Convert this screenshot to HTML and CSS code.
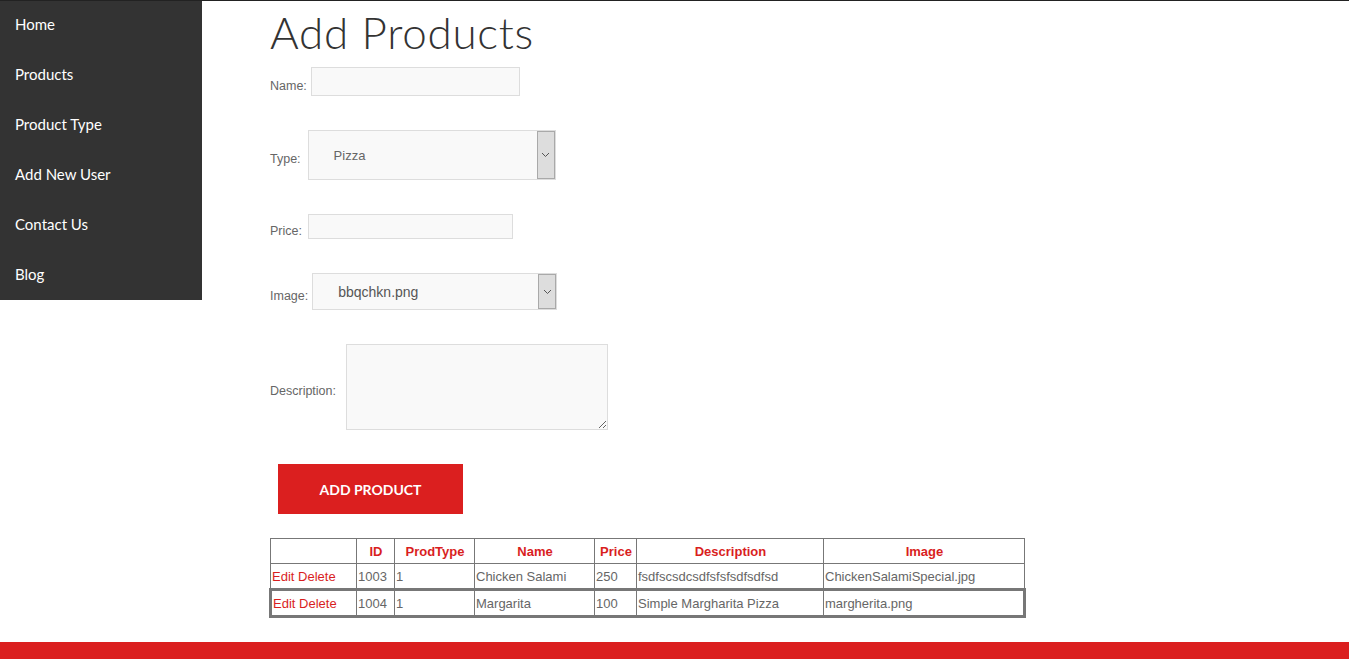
FILE: index.html
```html
<!DOCTYPE html>
<html>
<head>
<meta charset="utf-8">
<title>Add Products</title>
<link rel="stylesheet" href="styles.css">
</head>
<body>
<div class="page">
  <nav class="sidebar">
    <a class="nav-item" href="#">Home</a>
    <a class="nav-item" href="#">Products</a>
    <a class="nav-item" href="#">Product Type</a>
    <a class="nav-item" href="#">Add New User</a>
    <a class="nav-item" href="#">Contact Us</a>
    <a class="nav-item" href="#">Blog</a>
  </nav>
  <main class="main">
    <h1 class="title">Add Products</h1>
    <form class="form">
      <div class="row">
        <label class="label">Name:</label>
        <input class="field field-name" type="text">
      </div>
      <div class="row">
        <label class="label">Type:</label>
        <div class="select select-type">
          <span class="select-value">Pizza</span>
          <span class="select-arrow"><svg width="9" height="6" viewBox="0 0 9 6"><path d="M1 1l3.5 3.5L8 1" fill="none" stroke="#555" stroke-width="1"/></svg></span>
        </div>
      </div>
      <div class="row">
        <label class="label">Price:</label>
        <input class="field field-price" type="text">
      </div>
      <div class="row">
        <label class="label">Image:</label>
        <div class="select select-image">
          <span class="select-value value-image">bbqchkn.png</span>
          <span class="select-arrow"><svg width="9" height="6" viewBox="0 0 9 6"><path d="M1 1l3.5 3.5L8 1" fill="none" stroke="#555" stroke-width="1"/></svg></span>
        </div>
      </div>
      <div class="row">
        <label class="label">Description:</label>
        <textarea class="field field-desc"></textarea>
      </div>
      <div class="row">
        <button class="btn" type="button">ADD PRODUCT</button>
      </div>
    </form>
    <table class="table">
      <colgroup>
        <col class="c1"><col class="c2"><col class="c3"><col class="c4"><col class="c5"><col class="c6"><col class="c7">
      </colgroup>
      <thead>
        <tr>
          <th></th><th>ID</th><th>ProdType</th><th>Name</th><th>Price</th><th>Description</th><th>Image</th>
        </tr>
      </thead>
      <tbody>
        <tr>
          <td class="actions"><a href="#">Edit</a> <a href="#">Delete</a></td><td>1003</td><td>1</td><td>Chicken Salami</td><td>250</td><td>fsdfscsdcsdfsfsfsdfsdfsd</td><td>ChickenSalamiSpecial.jpg</td>
        </tr>
        <tr class="selected">
          <td class="actions"><a href="#">Edit</a> <a href="#">Delete</a></td><td>1004</td><td>1</td><td>Margarita</td><td>100</td><td>Simple Margharita Pizza</td><td>margherita.png</td>
        </tr>
      </tbody>
    </table>
  </main>
</div>
<footer class="footer"></footer>
</body>
</html>
```

FILE: styles.css
```css
html, body {
  margin: 0;
  padding: 0;
  background: #fff;
}
body {
  border-top: 1px solid #222;
  font-family: "Open Sans", "Liberation Sans", sans-serif;
}
.page {
  display: flex;
  align-items: flex-start;
}
.sidebar {
  width: 202px;
  flex: 0 0 202px;
  height: 299px;
  background: #333333;
  display: flex;
  flex-direction: column;
}
.nav-item {
  box-sizing: border-box;
  height: 50px;
  display: flex;
  align-items: center;
  padding-left: 15px;
  padding-bottom: 3px;
  color: #fff;
  text-decoration: none;
  font-family: "Lato", "Liberation Sans", sans-serif;
  font-size: 15px;
}
.main {
  padding-left: 68px;
  flex: 1;
}
.title {
  margin: 7px 0 11px 0;
  font-family: "Lato", "Liberation Sans", sans-serif;
  font-weight: 300;
  font-size: 44px;
  line-height: 48px;
  color: #333;
  letter-spacing: 0.7px;
}
.form {
  display: flex;
  flex-direction: column;
  gap: 34px;
}
.row {
  display: flex;
  align-items: center;
}
.label {
  font-family: "Liberation Sans", sans-serif;
  font-size: 12.5px;
  color: #666;
  padding-top: 8px;
}
.field {
  box-sizing: border-box;
  background: #f9f9f9;
  border: 1px solid #ddd;
  margin: 0;
  padding: 0;
  font: inherit;
}
.field-name {
  width: 209px;
  height: 29px;
  margin-left: 4px;
}
.field-price {
  width: 205px;
  height: 25px;
  margin-left: 6px;
}
.field-desc {
  width: 262px;
  height: 86px;
  margin-left: 10px;
  resize: both;
}
.select {
  box-sizing: border-box;
  display: flex;
  align-items: stretch;
  background: #f9f9f9;
  border: 1px solid #ddd;
}
.select-type {
  width: 248px;
  height: 50px;
  margin-left: 7px;
}
.select-image {
  width: 245px;
  height: 37px;
  margin-left: 4px;
}
.select-value {
  flex: 1;
  display: flex;
  align-items: center;
  padding-left: 25px;
  font-family: "Liberation Sans", sans-serif;
  font-size: 13px;
  color: #666;
}
.value-image {
  font-size: 14px;
  color: #555;
}
.select-arrow {
  width: 16px;
  background: #dddddd;
  border: 1px solid #a9a9a9;
  display: flex;
  align-items: center;
  justify-content: center;
}
.btn {
  margin-left: 8px;
  width: 185px;
  height: 50px;
  background: #db1f1f;
  color: #fff;
  border: none;
  font-family: "Lato", "Liberation Sans", sans-serif;
  font-weight: 700;
  font-size: 14px;
  padding: 0;
}
.table {
  margin-top: 24px;
  margin-left: -1px;
  border-collapse: collapse;
  width: 755px;
  table-layout: fixed;
  font-family: "Liberation Sans", sans-serif;
  font-size: 13px;
  color: #666;
}
.c1 { width: 86px; }
.c2 { width: 38px; }
.c3 { width: 80px; }
.c4 { width: 120px; }
.c5 { width: 42px; }
.c6 { width: 187px; }
.c7 { width: 201px; }
.table th, .table td {
  border: 1px solid #777;
  padding: 0 0 0 1px;
  white-space: nowrap;
  overflow: hidden;
}
.table th {
  height: 24px;
  color: #d91e1e;
  font-weight: 700;
  text-align: center;
}
.table td {
  height: 24px;
  text-align: left;
}
.table tr.selected {
  border: 3px solid #777;
}
.actions {
  padding-left: 0;
}
.actions a {
  color: #d91e1e;
  text-decoration: none;
}
.footer {
  margin-top: 24px;
  height: 40px;
  background: #db1f1f;
}
```
